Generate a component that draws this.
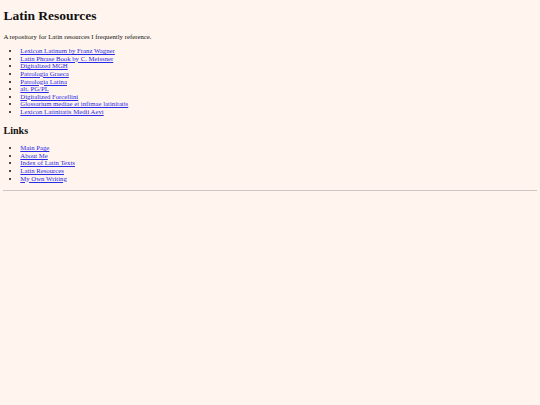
import React from "react";

const resources = [
  "Lexicon Latinum by Franz Wagner",
  "Latin Phrase Book by C. Meissner",
  "Digitalized MGH",
  "Patrologia Graeca",
  "Patrologia Latina",
  "alt. PG/PL",
  "Digitalized Forcellini",
  "Glossarium mediae et infimae latinitatis",
  "Lexicon Latinitatis Medii Aevi",
];

const links = [
  "Main Page",
  "About Me",
  "Index of Latin Texts",
  "Latin Resources",
  "My Own Writing",
];

function LinkList({ items }: { items: string[] }) {
  return (
    <ul className="list-disc pl-[16.9px] my-[6.75px]">
      {items.map((t) => (
        <li key={t} className="leading-[7.62px] h-[7.62px]">
          <a href="#" className="text-[#2a2ae6] underline decoration-[0.5px] underline-offset-[1px]">
            {t}
          </a>
        </li>
      ))}
    </ul>
  );
}

export default function App() {
  return (
    <div
      className="min-h-screen bg-[#fff5ee] text-[#111] px-[3.4px] pt-px"
      style={{ fontFamily: '"Liberation Serif", "Times New Roman", serif' }}
    >
      <div className="text-[6.75px]">
        <h1 className="text-[13.5px] font-bold leading-[14.7px] mt-[8px] mb-[9px]">
          Latin Resources
        </h1>
        <p className="leading-[7.62px] my-[6.75px]">
          A repository for Latin resources I frequently reference.
        </p>
        <LinkList items={resources} />
        <h2 className="text-[10.125px] font-bold leading-[11.2px] mt-[9px] mb-[8.4px]">Links</h2>
        <LinkList items={links} />
        <div className="h-px bg-[#cdc6c2] mt-[7.5px]" />
      </div>
    </div>
  );
}
